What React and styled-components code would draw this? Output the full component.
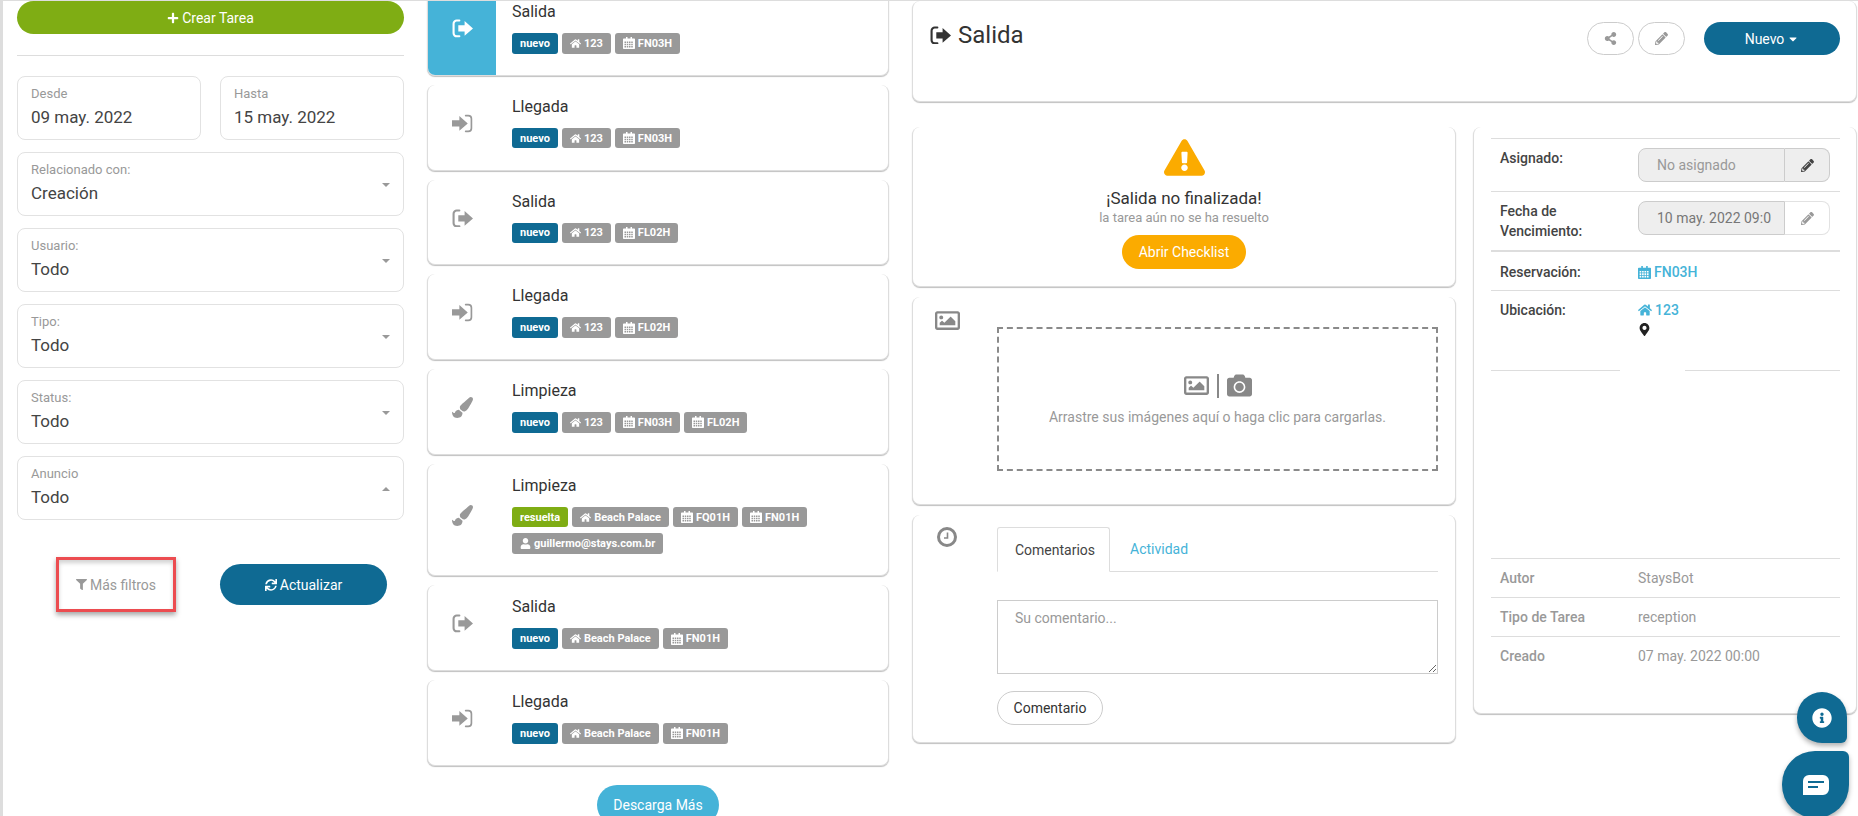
import styled, { createGlobalStyle } from "styled-components";
import {
  FaCamera,
  FaCaretDown,
  FaExclamationTriangle,
  FaFilter,
  FaHome,
  FaInfoCircle,
  FaMapMarkerAlt,
  FaPaintBrush,
  FaPencilAlt,
  FaPlus,
  FaRegImage,
  FaShareAlt,
  FaSync,
  FaUser,
} from "react-icons/fa";

const Global = createGlobalStyle`
  html, body {
    margin: 0;
    padding: 0;
    background: #fff;
    font-family: Roboto, "Liberation Sans", sans-serif;
    color: #333;
  }
  * { box-sizing: border-box; }
`;

const Page = styled.div`
  width: 1858px;
  height: 816px;
  overflow: hidden;
  border-top: 1px solid #ddd;
  border-left: 3px solid #ddd;
  display: grid;
  grid-template-columns: 424px 462px 968px;
`;

const Filters = styled.aside`
  padding: 0 23px 0 14px;
`;

const PillButton = styled.button`
  display: flex;
  align-items: center;
  justify-content: center;
  gap: 3px;
  border: none;
  border-radius: 21px;
  font: 400 14px Roboto, sans-serif;
  color: #fff;
  background: ${(p) => p.$bg || "#0f6a93"};
  width: ${(p) => p.$w}px;
  height: ${(p) => p.$h}px;
  flex: none;
  padding: 0;
`;

const Rule = styled.hr`
  border: none;
  border-top: 1px solid #ddd;
  margin: 21px 0 20px;
`;

const DateRow = styled.div`
  display: grid;
  grid-template-columns: 184px 184px;
  justify-content: space-between;
  margin-bottom: 12px;
`;

const Field = styled.div`
  position: relative;
  height: 64px;
  border: 1px solid #e2e2e2;
  border-radius: 8px;
  padding: 9px 13px 0;
  margin-bottom: ${(p) => (p.$flat ? 0 : 12)}px;
`;

const FieldLabel = styled.div`
  font-size: 13px;
  line-height: 16px;
  color: #999;
`;

const FieldValue = styled.div`
  font-size: 17px;
  line-height: 22px;
  margin-top: 4px;
  color: #444;
`;

const Caret = styled.span`
  position: absolute;
  right: 13px;
  top: 30px;
  width: 0;
  height: 0;
  border-left: 4.5px solid transparent;
  border-right: 4.5px solid transparent;
  border-top: ${(p) => (p.$up ? "none" : "4.5px solid #999")};
  border-bottom: ${(p) => (p.$up ? "4.5px solid #999" : "none")};
`;

const FilterActions = styled.div`
  display: flex;
  align-items: center;
  gap: 44px;
  margin: 37px 0 0 39px;
`;

const MoreFilters = styled.div`
  width: 120px;
  height: 55px;
  border: 3px solid #ec4c50;
  box-shadow: 0 3px 5px rgba(0, 0, 0, 0.35), inset 0 3px 4px rgba(0, 0, 0, 0.18);
  display: flex;
  align-items: center;
  justify-content: center;
  gap: 3px;
  font-size: 14px;
  color: #999;
  flex: none;
`;

const TaskList = styled.section`
  margin-top: -11px;
  display: flex;
  flex-direction: column;
  gap: 9px;
`;

const Card = styled.article`
  background: #fff;
  border: 1px solid #ddd;
  border-top: none;
  border-radius: 8px;
  box-shadow: 0 1px 1px rgba(0, 0, 0, 0.25);
`;

const TaskCard = styled(Card)`
  display: flex;
  overflow: hidden;
  flex: none;
`;

const TaskIcon = styled.div`
  width: 68px;
  flex: none;
  display: flex;
  align-items: center;
  justify-content: center;
  padding-bottom: 8px;
  font-size: 21px;
  color: ${(p) => (p.$active ? "#fff" : "#999")};
  background: ${(p) => (p.$active ? "#45b3d8" : "transparent")};
`;

const TaskBody = styled.div`
  padding: 11px 16px 21.3px;
  flex: 1;
`;

const TaskTitle = styled.div`
  font-size: 16px;
  line-height: 22px;
  margin-bottom: 10px;
  color: #333;
`;

const Badges = styled.div`
  display: flex;
  flex-wrap: wrap;
  gap: 6px 4px;
`;

const Badge = styled.span`
  display: inline-flex;
  align-items: center;
  gap: 3px;
  height: 20.5px;
  padding: 0 8px;
  border-radius: 3px;
  font-size: 11px;
  font-weight: 700;
  color: #fff;
  background: ${(p) => p.$bg || "#999"};
`;

const LoadMore = styled(PillButton)`
  align-self: center;
  margin-top: 10px;
`;

const Detail = styled.section`
  margin-left: 23px;
`;

const Header = styled(Card)`
  height: 101px;
  padding: 20px 16px 0 17px;
  display: flex;
  justify-content: space-between;
  align-items: flex-start;
  margin-bottom: 25px;
`;

const Title = styled.h1`
  margin: 0;
  display: flex;
  align-items: center;
  gap: 7px;
  font-size: 24px;
  font-weight: 400;
  line-height: 28px;
  color: #333;
`;

const HeaderActions = styled.div`
  display: flex;
  align-items: center;
  margin-top: 1px;
`;

const RoundButton = styled.button`
  width: 47px;
  height: 33px;
  border: 1px solid #ccc;
  border-radius: 17px;
  background: #fff;
  color: #999;
  font-size: 13px;
  margin-right: 4px;
  padding: 0;
  display: flex;
  align-items: center;
  justify-content: center;
`;

const NewButton = styled(PillButton)`
  margin-left: 15px;
`;

const DetailGrid = styled.div`
  display: grid;
  grid-template-columns: 544px 384px;
  column-gap: 17px;
  align-items: start;
`;

const Stack = styled.div`
  display: flex;
  flex-direction: column;
  gap: 10px;
`;

const AlertCard = styled(Card)`
  height: 160px;
  padding-top: 10px;
  display: flex;
  flex-direction: column;
  align-items: center;
`;

const AlertIcon = styled.div`
  font-size: 41px;
  line-height: 40px;
  height: 40px;
  color: #fbab00;
`;

const AlertTitle = styled.div`
  font-size: 17px;
  line-height: 20px;
  margin-top: 11px;
  color: #333;
`;

const AlertNote = styled.div`
  font-size: 13px;
  line-height: 16px;
  margin-top: 2px;
  color: #999;
`;

const AlertButton = styled(PillButton)`
  margin-top: 9px;
`;

const SectionCard = styled(Card)`
  display: flex;
  height: ${(p) => p.$h}px;
  padding: ${(p) => p.$top}px 17px 0 0;
`;

const SectionIcon = styled.div`
  width: 84px;
  flex: none;
  padding-left: ${(p) => p.$pad}px;
  font-size: ${(p) => p.$size}px;
  line-height: 1;
  color: #888;
`;

const SectionBody = styled.div`
  flex: 1;
  min-width: 0;
`;

const DropZone = styled.div`
  height: 144px;
  margin-top: 19px;
  border: 2px dashed #8a8a8a;
  display: flex;
  flex-direction: column;
  align-items: center;
  justify-content: center;
  color: #999;
  font-size: 14px;
`;

const DropIcons = styled.div`
  display: flex;
  align-items: center;
  gap: 8px;
  font-size: 25px;
  color: #888;
  margin-bottom: 11px;
`;

const DropBar = styled.span`
  width: 2px;
  height: 24px;
  background: #888;
`;

const Tabs = styled.div`
  display: flex;
  height: 45px;
  border-bottom: 1px solid #ddd;
  font-size: 14px;
`;

const ActiveTab = styled.div`
  width: 113px;
  height: 45px;
  display: flex;
  align-items: center;
  padding: 0 17px;
  margin-right: 2px;
  color: #444;
  background: #fff;
  border: 1px solid #ddd;
  border-bottom-color: #fff;
  border-radius: 3px 3px 0 0;
`;

const Tab = styled.div`
  height: 44px;
  display: flex;
  align-items: center;
  padding: 0 18px;
  color: #45b3d8;
`;

const CommentBox = styled.textarea`
  display: block;
  width: 100%;
  height: 74px;
  margin: 28px 0 17px;
  padding: 8px 17px;
  border: 1px solid #ccc;
  border-radius: 0;
  font: 400 14px/18px Roboto, sans-serif;
  color: #333;
  &::placeholder {
    color: #999;
  }
`;

const CommentButton = styled.button`
  width: 106px;
  height: 34px;
  border: 1px solid #ccc;
  border-radius: 17px;
  background: #fff;
  font: 400 14px Roboto, sans-serif;
  color: #333;
  padding: 0;
`;

const Side = styled(Card)`
  height: 587px;
  padding: 11px 16px 0 17px;
`;

const Row = styled.div`
  display: grid;
  grid-template-columns: 147px 1fr;
  height: ${(p) => p.$h}px;
  border-top: ${(p) => p.$line || 1}px solid #ddd;
  font-size: 14px;
  line-height: 20px;
`;

const RowLabel = styled.div`
  padding: ${(p) => p.$top}px 0 0 9px;
  font-weight: 500;
  color: ${(p) => (p.$muted ? "#999" : "#444")};
`;

const RowValue = styled.div`
  padding-top: ${(p) => p.$top}px;
  color: ${(p) => (p.$muted ? "#999" : "#444")};
`;

const InputGroup = styled.div`
  display: grid;
  grid-template-columns: 147px 45px;
  height: 34px;
  width: 192px;
`;

const GroupText = styled.div`
  display: flex;
  align-items: center;
  padding-left: 18px;
  overflow: hidden;
  white-space: nowrap;
  background: #eee;
  border: 1px solid #ccc;
  border-radius: 8px 0 0 8px;
  color: ${(p) => (p.$dim ? "#999" : "#777")};
`;

const GroupButton = styled.div`
  display: flex;
  align-items: center;
  justify-content: center;
  font-size: 13px;
  border: 1px solid ${(p) => (p.$filled ? "#ccc" : "#e2e2e2")};
  border-left: none;
  border-radius: 0 8px 8px 0;
  background: ${(p) => (p.$filled ? "#eee" : "#fff")};
  color: ${(p) => (p.$filled ? "#444" : "#999")};
`;

const LinkValue = styled.div`
  display: flex;
  align-items: center;
  gap: 3px;
  font-weight: 500;
  color: #45b3d8;
`;

const Pin = styled.div`
  height: 20px;
  margin-top: 2px;
  font-size: 13px;
  color: #222;
`;

const SplitLine = styled.div`
  display: flex;
  justify-content: space-between;
  height: 188px;
  &::before,
  &::after {
    content: "";
    height: 1px;
    background: #ddd;
  }
  &::before {
    width: 129px;
  }
  &::after {
    width: 155px;
  }
`;

const Fab = styled.button`
  position: absolute;
  left: ${(p) => p.$x}px;
  top: ${(p) => p.$y}px;
  width: ${(p) => p.$w}px;
  height: ${(p) => p.$h}px;
  border: none;
  padding: 0;
  color: #fff;
  background: #0f6a93;
  border-radius: ${(p) => p.$radius};
  box-shadow: 0 3px 5px rgba(0, 0, 0, 0.3);
  display: flex;
  align-items: center;
  justify-content: center;
`;

const SignOutIcon = ({ size = 21 }) => (
  <svg width={size} height={size * 0.9} viewBox="0 0 20 18">
    <path
      d="M7 1.5H4.5a3 3 0 0 0-3 3v9a3 3 0 0 0 3 3H7"
      fill="none"
      stroke="currentColor"
      strokeWidth="2"
      strokeLinecap="round"
    />
    <path d="M6 6h6V2l8 7-8 7v-4H6z" fill="currentColor" />
  </svg>
);

const SignInIcon = ({ size = 21 }) => (
  <svg width={size} height={size * 0.9} viewBox="0 0 20 18">
    <path
      d="M13 1.5h2.5a3 3 0 0 1 3 3v9a3 3 0 0 1-3 3H13"
      fill="none"
      stroke="currentColor"
      strokeWidth="1.6"
      strokeLinecap="round"
    />
    <path d="M0 6h7V2l8 7-8 7v-4H0z" fill="currentColor" />
  </svg>
);

// calendar with its grid of day cells cut out of the body
const cells = [0, 1, 2, 3]
  .flatMap((c) => [0, 1, 2].map((r) => `M${2 + c * 3} ${6 + r * 3}h2v2h-2z`))
  .join("");

const CalendarIcon = ({ size = 12 }) => (
  <svg width={size} height={size} viewBox="0 0 16 16">
    <path
      fillRule="evenodd"
      fill="currentColor"
      d={`M4 0h2v2h4V0h2v2h3a1 1 0 0 1 1 1v12a1 1 0 0 1-1 1H1a1 1 0 0 1-1-1V3a1 1 0 0 1 1-1h3z${cells}`}
    />
  </svg>
);

const ClockIcon = () => (
  <svg width="20" height="20" viewBox="0 0 20 20">
    <circle cx="10" cy="10" r="8.5" fill="none" stroke="currentColor" strokeWidth="3" />
    <path d="M10.5 5.5v5.5H7" fill="none" stroke="currentColor" strokeWidth="1.6" />
  </svg>
);

const ChatIcon = () => (
  <svg width="26" height="20" viewBox="0 0 26 20">
    <path
      fillRule="evenodd"
      fill="#fff"
      d="M6 0h14a6 6 0 0 1 6 6v8a6 6 0 0 1-6 6H0V6a6 6 0 0 1 6-6zM5 6v2h16V6zm0 5v2h10v-2z"
    />
  </svg>
);

const home = <FaHome />;
const cal = <CalendarIcon />;

const tasks = [
  { title: "Salida", Icon: SignOutIcon, active: true, tags: [[home, "123"], [cal, "FN03H"]] },
  { title: "Llegada", Icon: SignInIcon, tags: [[home, "123"], [cal, "FN03H"]] },
  { title: "Salida", Icon: SignOutIcon, tags: [[home, "123"], [cal, "FL02H"]] },
  { title: "Llegada", Icon: SignInIcon, tags: [[home, "123"], [cal, "FL02H"]] },
  { title: "Limpieza", Icon: FaPaintBrush, tags: [[home, "123"], [cal, "FN03H"], [cal, "FL02H"]] },
  {
    title: "Limpieza",
    Icon: FaPaintBrush,
    done: true,
    tags: [[home, "Beach Palace"], [cal, "FQ01H"], [cal, "FN01H"], [<FaUser />, "guillermo@stays.com.br"]],
  },
  { title: "Salida", Icon: SignOutIcon, tags: [[home, "Beach Palace"], [cal, "FN01H"]] },
  { title: "Llegada", Icon: SignInIcon, tags: [[home, "Beach Palace"], [cal, "FN01H"]] },
];

const selects = [
  ["Relacionado con:", "Creación"],
  ["Usuario:", "Todo"],
  ["Tipo:", "Todo"],
  ["Status:", "Todo"],
];

const App = () => {
  return (
    <Page>
      <Global />
      <Filters>
        <PillButton $bg="#7fad14" $w={387} $h={33}>
          <FaPlus size={12} /> Crear Tarea
        </PillButton>
        <Rule />
        <DateRow>
          <Field $flat>
            <FieldLabel>Desde</FieldLabel>
            <FieldValue>09 may. 2022</FieldValue>
          </Field>
          <Field $flat>
            <FieldLabel>Hasta</FieldLabel>
            <FieldValue>15 may. 2022</FieldValue>
          </Field>
        </DateRow>
        {selects.map(([label, value]) => (
          <Field key={label}>
            <FieldLabel>{label}</FieldLabel>
            <FieldValue>{value}</FieldValue>
            <Caret />
          </Field>
        ))}
        <Field $flat>
          <FieldLabel>Anuncio</FieldLabel>
          <FieldValue>Todo</FieldValue>
          <Caret $up />
        </Field>
        <FilterActions>
          <MoreFilters>
            <FaFilter size={11} /> Más filtros
          </MoreFilters>
          <PillButton $w={167} $h={41}>
            <FaSync size={12} /> Actualizar
          </PillButton>
        </FilterActions>
      </Filters>

      <TaskList>
        {tasks.map((t, i) => (
          <TaskCard key={i}>
            <TaskIcon $active={t.active}>
              <t.Icon />
            </TaskIcon>
            <TaskBody>
              <TaskTitle>{t.title}</TaskTitle>
              <Badges>
                <Badge $bg={t.done ? "#7fad14" : "#0f6a93"}>{t.done ? "resuelta" : "nuevo"}</Badge>
                {t.tags.map(([icon, text]) => (
                  <Badge key={text}>
                    {icon} {text}
                  </Badge>
                ))}
              </Badges>
            </TaskBody>
          </TaskCard>
        ))}
        <LoadMore $bg="#45b3d8" $w={122} $h={40}>
          Descarga Más
        </LoadMore>
      </TaskList>

      <Detail>
        <Header>
          <Title>
            <SignOutIcon size={21} /> Salida
          </Title>
          <HeaderActions>
            <RoundButton>
              <FaShareAlt />
            </RoundButton>
            <RoundButton>
              <FaPencilAlt />
            </RoundButton>
            <NewButton $w={136} $h={33}>
              Nuevo <FaCaretDown size={12} />
            </NewButton>
          </HeaderActions>
        </Header>
        <DetailGrid>
          <Stack>
            <AlertCard>
              <AlertIcon>
                <FaExclamationTriangle />
              </AlertIcon>
              <AlertTitle>¡Salida no finalizada!</AlertTitle>
              <AlertNote>la tarea aún no se ha resuelto</AlertNote>
              <AlertButton $bg="#fbab00" $w={124} $h={34}>
                Abrir Checklist
              </AlertButton>
            </AlertCard>
            <SectionCard $h={208} $top={11}>
              <SectionIcon $pad={22} $size={25}>
                <FaRegImage />
              </SectionIcon>
              <SectionBody>
                <DropZone>
                  <DropIcons>
                    <FaRegImage />
                    <DropBar />
                    <FaCamera />
                  </DropIcons>
                  Arrastre sus imágenes aquí o haga clic para cargarlas.
                </DropZone>
              </SectionBody>
            </SectionCard>
            <SectionCard $h={228} $top={12}>
              <SectionIcon $pad={24} $size={20}>
                <ClockIcon />
              </SectionIcon>
              <SectionBody>
                <Tabs>
                  <ActiveTab>Comentarios</ActiveTab>
                  <Tab>Actividad</Tab>
                </Tabs>
                <CommentBox placeholder="Su comentario..." />
                <CommentButton>Comentario</CommentButton>
              </SectionBody>
            </SectionCard>
          </Stack>
          <Side>
            <Row $h={53}>
              <RowLabel $top={9}>Asignado:</RowLabel>
              <RowValue $top={9}>
                <InputGroup>
                  <GroupText $dim>No asignado</GroupText>
                  <GroupButton $filled>
                    <FaPencilAlt />
                  </GroupButton>
                </InputGroup>
              </RowValue>
            </Row>
            <Row $h={59}>
              <RowLabel $top={9}>
                Fecha de
                <br />
                Vencimiento:
              </RowLabel>
              <RowValue $top={9}>
                <InputGroup>
                  <GroupText>10 may. 2022 09:0</GroupText>
                  <GroupButton>
                    <FaPencilAlt />
                  </GroupButton>
                </InputGroup>
              </RowValue>
            </Row>
            <Row $h={40} $line={2}>
              <RowLabel $top={10}>Reservación:</RowLabel>
              <RowValue $top={10}>
                <LinkValue>
                  <CalendarIcon size={13} /> FN03H
                </LinkValue>
              </RowValue>
            </Row>
            <Row $h={80}>
              <RowLabel $top={9}>Ubicación:</RowLabel>
              <RowValue $top={9}>
                <LinkValue>
                  <FaHome /> 123
                </LinkValue>
                <Pin>
                  <FaMapMarkerAlt />
                </Pin>
              </RowValue>
            </Row>
            <SplitLine />
            <Row $h={39}>
              <RowLabel $top={9} $muted>Autor</RowLabel>
              <RowValue $top={9} $muted>StaysBot</RowValue>
            </Row>
            <Row $h={39}>
              <RowLabel $top={9} $muted>Tipo de Tarea</RowLabel>
              <RowValue $top={9} $muted>reception</RowValue>
            </Row>
            <Row $h={39}>
              <RowLabel $top={9} $muted>Creado</RowLabel>
              <RowValue $top={9} $muted>07 may. 2022 00:00</RowValue>
            </Row>
          </Side>
        </DetailGrid>
      </Detail>

      <Fab $x={1797} $y={692} $w={50} $h={51} $radius="25px 25px 6px 25px">
        <FaInfoCircle size={20} />
      </Fab>
      <Fab $x={1782} $y={751} $w={67} $h={67} $radius="33px 6px 33px 33px">
        <ChatIcon />
      </Fab>
    </Page>
  );
};

export default App;
